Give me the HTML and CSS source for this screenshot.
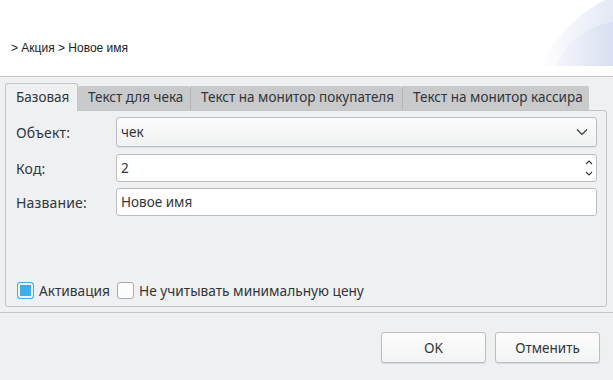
FILE: index.html
```html
<!DOCTYPE html>
<html lang="ru">
 <head>
   <title>Акция</title>
   <meta charset="utf-8"/>
   <link rel="stylesheet" href="styles.css">
 </head>

 <body>
   <div id="wrap">
      <header id="top">
         <p class="crumbs">&gt; Акция &gt; Новое имя</p>
         <svg class="swoosh" width="80" height="66" viewBox="0 0 80 66">
            <defs>
               <linearGradient id="g1" x1="0" y1="0" x2="1" y2="0">
                  <stop offset="0" stop-color="#ffffff"/>
                  <stop offset="1" stop-color="#e4e8f5"/>
               </linearGradient>
               <linearGradient id="g2" x1="0" y1="0" x2="1" y2="0">
                  <stop offset="0" stop-color="#f4f6fb"/>
                  <stop offset="1" stop-color="#d9dff2"/>
               </linearGradient>
            </defs>
            <path d="M80 0 L72 0 C46 12 22 38 6 66 L80 66 Z" fill="url(#g1)"/>
            <path d="M80 22 C52 26 32 44 22 66 L80 66 Z" fill="url(#g2)"/>
         </svg>
      </header>

      <section id="content">
         <ul class="tabs">
            <li class="tab on">Базовая</li>
            <li class="tab">Текст для чека</li>
            <li class="tab">Текст на монитор покупателя</li>
            <li class="tab">Текст на монитор кассира</li>
         </ul>
         <div class="panel">
            <div class="row">
               <label>Объект:</label>
               <div class="field combo">
                  <span>чек</span>
                  <svg width="12" height="8" viewBox="0 0 12 8"><path d="M1 1.5 L6 6.5 L11 1.5" fill="none" stroke="#31363b" stroke-width="1.1"/></svg>
               </div>
            </div>
            <div class="row">
               <label>Код:</label>
               <div class="field spin">
                  <span>2</span>
                  <svg width="8" height="20" viewBox="0 0 8 20"><path d="M1 6 L4 3 L7 6 M1 14 L4 17 L7 14" fill="none" stroke="#31363b" stroke-width="1.1"/></svg>
               </div>
            </div>
            <div class="row">
               <label>Название:</label>
               <div class="field">
                  <span>Новое имя</span>
               </div>
            </div>
            <div class="checks">
               <span class="box checked"></span><span class="cap">Активация</span>
               <span class="box"></span><span class="cap">Не учитывать минимальную цену</span>
            </div>
         </div>
      </section>

      <footer id="bottom">
         <button class="btn">OK</button>
         <button class="btn">Отменить</button>
      </footer>
   </div>
 </body>
</html>
```

FILE: styles.css
```css
/*####### reset #######*/
   *{margin:0; padding:0; box-sizing:border-box;}
   ul{list-style:none;}

   body{background-color:#eff0f1; color:#31363b; font-family:"Noto Sans", "Open Sans", sans-serif; font-size:13.5px;}
   #wrap{width:613px; height:380px;}

/*####### header #######*/
   #top{position:relative; height:77px; background-color:#fff; border-bottom:1px solid #c4c5c6;}
   #top .crumbs{position:absolute; left:11px; top:41px; font-family:"Liberation Sans", Arial, sans-serif; font-size:12px; color:#222;}
   #top .swoosh{position:absolute; right:0; top:0;}

/*####### tabs #######*/
   #content{padding:6px 6px 0 5px;}
   .tabs{display:flex; align-items:flex-end; height:27px;}
   .tab{height:24px; line-height:23px; padding:0 10px; background-color:#c9cacb; border-left:1px solid #b4b5b6; border-radius:2px 2px 0 0; white-space:nowrap;}
   .tab:nth-child(2){border-left:none; width:112px;}
   .tab:nth-child(3){width:212px;}
   .tab:nth-child(4){width:187px;}
   .tab.on{height:28px; line-height:27px; width:73px; background-color:#eff0f1; border:1px solid #c4c5c6; border-bottom:none; border-radius:3px 3px 0 0; position:relative; top:1px; z-index:1;}

/*####### panel #######*/
   .panel{height:197px; border:1px solid #c4c5c6; border-radius:0 3px 3px 3px; padding:6px 9px 0 10px; display:flex; flex-direction:column;}
   .row{display:grid; grid-template-columns:100px 1fr; align-items:center; margin-bottom:6px;}
   .row:nth-child(1){margin-bottom:7px;}
   .row label{display:block; font-size:14px; letter-spacing:0.15px;}
   .field{height:28px; background-color:#fff; border:1px solid #bcbdbe; border-radius:3px; display:flex; align-items:center; justify-content:space-between; padding:0 6px 0 4px;}
   .combo{height:30px; background:linear-gradient(#fcfcfc, #f0f1f1); padding:0 8px 0 4px; box-shadow:0 1px 1px rgba(0,0,0,0.08);}
   .spin{padding-right:3px;}

   .checks{margin-top:auto; margin-bottom:7px; display:flex; align-items:center; height:18px; font-size:13.7px;}
   .box{width:17px; height:17px; border:1px solid #a8a9aa; border-radius:3px; background-color:#fcfcfc; margin-left:1px;}
   .box.checked{border-color:#3daee9; background-color:#3daee9; box-shadow:inset 0 0 0 2px #eaf6fc;}
   .cap{margin:0 6px 0 5px;}

/*####### footer #######*/
   #bottom{margin-top:5px; border-top:1px solid #c4c5c6; display:flex; justify-content:flex-end; gap:9px; padding:19px 13px 0 0;}
   .btn{width:105px; height:31px; font-family:inherit; font-size:13.5px; color:#31363b; background:linear-gradient(#fcfcfc, #f2f3f3); border:1px solid #bcbdbe; border-radius:3px; box-shadow:0 1px 1px rgba(0,0,0,0.1);}
```
